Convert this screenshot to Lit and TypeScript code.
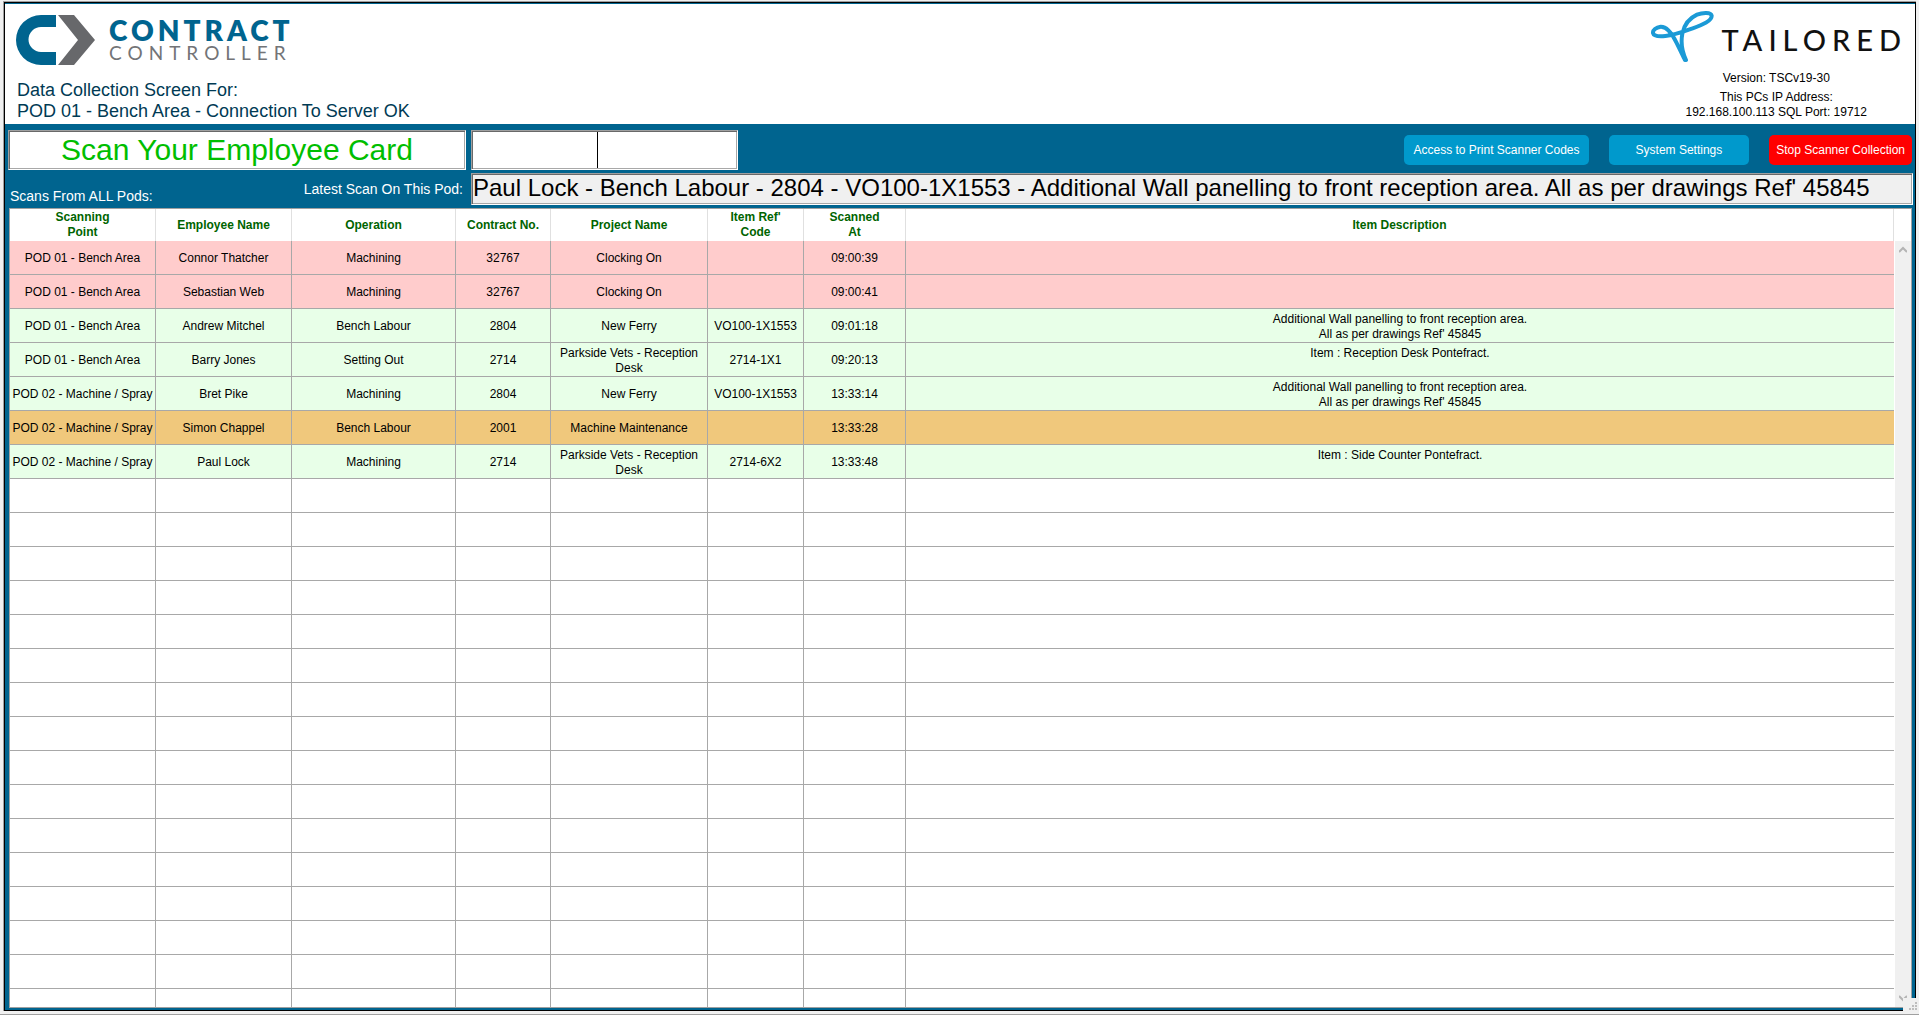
import { LitElement, html, css, nothing } from "lit";
import { customElement, property } from "lit/decorators.js";

type Tone = "clock" | "job" | "maintenance";

interface Scan {
  tone: Tone;
  point: string;
  employee: string;
  operation: string;
  contract: string;
  project: string;
  itemRef: string;
  time: string;
  description: string[];
}

const scan = (
  tone: Tone,
  point: string,
  employee: string,
  operation: string,
  contract: string,
  project: string,
  itemRef: string,
  time: string,
  ...description: string[]
): Scan => ({ tone, point, employee, operation, contract, project, itemRef, time, description });

const BENCH = "POD 01 - Bench Area";
const SPRAY = "POD 02 - Machine / Spray";
const WALL = ["Additional Wall panelling to front reception area.", "All as per drawings Ref' 45845"];

const SCANS: Scan[] = [
  scan("clock", BENCH, "Connor Thatcher", "Machining", "32767", "Clocking On", "", "09:00:39"),
  scan("clock", BENCH, "Sebastian Web", "Machining", "32767", "Clocking On", "", "09:00:41"),
  scan("job", BENCH, "Andrew Mitchel", "Bench Labour", "2804", "New Ferry", "VO100-1X1553", "09:01:18", ...WALL),
  scan("job", BENCH, "Barry Jones", "Setting Out", "2714", "Parkside Vets - Reception Desk", "2714-1X1", "09:20:13", "Item : Reception Desk Pontefract."),
  scan("job", SPRAY, "Bret Pike", "Machining", "2804", "New Ferry", "VO100-1X1553", "13:33:14", ...WALL),
  scan("maintenance", SPRAY, "Simon Chappel", "Bench Labour", "2001", "Machine Maintenance", "", "13:33:28"),
  scan("job", SPRAY, "Paul Lock", "Machining", "2714", "Parkside Vets - Reception Desk", "2714-6X2", "13:33:48", "Item : Side Counter Pontefract."),
];

const BLANK_ROWS = 16;

@customElement("contract-logo")
class ContractLogo extends LitElement {
  static styles = css`
    :host { display: flex; align-items: center; gap: 13px; }
    .mark { display: block; width: 80px; height: 50px; }
    .words { display: flex; flex-direction: column; white-space: nowrap; }
    .top { font: 800 28px/26px Lato, sans-serif; letter-spacing: 4px; color: #00648f; }
    .bottom { font: 400 19px/20px Lato, sans-serif; letter-spacing: 6px; color: #737477; }
  `;
  render() {
    return html`
      <svg class="mark" viewBox="0 0 80 50" aria-hidden="true">
        <path fill="#00648f" d="M40 0H25a25 25 0 0 0 0 50H40V37H25a12 12 0 0 1 0-25H40Z" />
        <path fill="#67686b" d="M42 0H58L79 25L58 50H42L62 25Z" />
      </svg>
      <div class="words"><span class="top">CONTRACT</span><span class="bottom">CONTROLLER</span></div>
    `;
  }
}

@customElement("tailored-logo")
class TailoredLogo extends LitElement {
  static styles = css`
    :host { display: flex; align-items: center; gap: 7px; }
    .mark { display: block; width: 63px; height: 53px; }
    .word { font: 500 29px/32px Lato, sans-serif; letter-spacing: 6px; color: #111; padding-top: 7px; margin-right: -6px; }
  `;
  render() {
    return html`
      <svg class="mark" viewBox="35 30 189 159" aria-hidden="true">
        <path
          fill="none"
          stroke="#1b9ad6"
          stroke-width="12"
          stroke-linejoin="round"
          stroke-linecap="round"
          d="M137 180C131 168 121 147 111 127C98 100 84 79 64 80C50 82 40 91 41 99C43 108 59 110 78 108C108 105 132 95 160 85C190 74 218 62 217 47C215 36 190 37 173 44C149 55 134 76 129 101C124 128 129 157 140 180Z"
        />
      </svg>
      <span class="word">TAILORED</span>
    `;
  }
}

@customElement("scan-table")
class ScanTable extends LitElement {
  @property({ attribute: false }) scans: Scan[] = [];
  @property({ type: Number }) blanks = 0;

  static styles = css`
    :host {
      display: flex;
      min-height: 0;
      overflow: hidden;
      background: #fff;
      border: 1px solid #a0a0a0;
      font: 12px/15px "Liberation Sans", Arial, sans-serif;
    }
    .view { flex: 1; min-width: 0; overflow: hidden; padding-right: 1px; }
    .grid { width: 100%; table-layout: fixed; border-collapse: separate; border-spacing: 0; }
    .point { width: 146px; }
    .employee { width: 136px; }
    .operation { width: 164px; }
    .contract { width: 95px; }
    .project { width: 157px; }
    .ref { width: 96px; }
    .time { width: 102px; }
    th, td { box-sizing: border-box; padding: 0 2px; text-align: center; vertical-align: middle; }
    th { height: 32px; padding: 0 40px; color: #006400; border-right: 1px solid #e0e0e0; }
    th.tight { padding: 0 2px; }
    td { height: 34px; padding-top: 2px; color: #000; border-right: 1px solid #a8a8a8; border-bottom: 1px solid #a8a8a8; }
    td:last-child { border-right: 0; padding-top: 3px; vertical-align: top; }
    .clock { background: #ffcccc; }
    .job { background: #e8ffe8; }
    .maintenance { background: #f0c87c; }
    .line { display: block; }
    .bar {
      display: flex;
      flex-direction: column;
      justify-content: space-between;
      align-items: center;
      width: 16px;
      margin-top: 32px;
      padding: 5px 0;
      box-sizing: border-box;
      background: #f0f0f0;
    }
    .arrow { display: block; width: 8px; height: 8px; }
  `;

  render() {
    return html`
      <div class="view">
        <table class="grid">
          <colgroup>
            <col class="point" /><col class="employee" /><col class="operation" /><col class="contract" />
            <col class="project" /><col class="ref" /><col class="time" /><col />
          </colgroup>
          <thead>
            <tr>
              <th scope="col">Scanning Point</th>
              <th scope="col" class="tight">Employee Name</th>
              <th scope="col" class="tight">Operation</th>
              <th scope="col" class="tight">Contract No.</th>
              <th scope="col" class="tight">Project Name</th>
              <th scope="col" class="tight">Item Ref'<br />Code</th>
              <th scope="col" class="tight">Scanned<br />At</th>
              <th scope="col" class="tight">Item Description</th>
            </tr>
          </thead>
          <tbody>
            ${this.scans.map(
              (s) => html`<tr class=${s.tone}>
                <td>${s.point}</td>
                <td>${s.employee}</td>
                <td>${s.operation}</td>
                <td>${s.contract}</td>
                <td>${s.project}</td>
                <td>${s.itemRef}</td>
                <td>${s.time}</td>
                <td>${s.description.length ? s.description.map((d) => html`<span class="line">${d}</span>`) : nothing}</td>
              </tr>`
            )}
            ${Array.from(
              { length: this.blanks },
              () => html`<tr><td></td><td></td><td></td><td></td><td></td><td></td><td></td><td></td></tr>`
            )}
          </tbody>
        </table>
      </div>
      <div class="bar" aria-hidden="true">
        <svg class="arrow" viewBox="0 0 8 8"><path d="M0 6L4 2L8 6" fill="none" stroke="#b4b4b4" stroke-width="2" /></svg>
        <svg class="arrow" viewBox="0 0 8 8"><path d="M0 2L4 6L8 2" fill="none" stroke="#b4b4b4" stroke-width="2" /></svg>
      </div>
    `;
  }
}

@customElement("app-root")
class AppRoot extends LitElement {
  static styles = css`
    :host {
      display: block;
      position: relative;
      box-sizing: border-box;
      height: 100vh;
      padding: 1px 3px 3px 3px;
      overflow: hidden;
      background: #f0f0f0;
      border-bottom: 1px solid #a0a0a0;
      font-family: "Liberation Sans", Arial, sans-serif;
    }
    .frame {
      box-sizing: border-box;
      height: 100%;
      border-top: 1px solid #a0a0a0;
      border-left: 1px solid #a0a0a0;
    }
    .window {
      display: flex;
      flex-direction: column;
      box-sizing: border-box;
      height: 100%;
      border: 1px solid #000;
      background: #00648f;
      padding-top: 1px;
    }
    .header {
      display: flex;
      justify-content: space-between;
      box-sizing: border-box;
      height: 120px;
      background: #fff;
      padding: 6px 14px 0 11px;
    }
    .left { display: flex; flex-direction: column; gap: 15px; padding-top: 5px; }
    .title { margin: 0; padding-left: 1px; font-size: 18px; line-height: 21px; font-weight: 400; color: #003a54; }
    .right { display: flex; flex-direction: column; align-items: center; font-size: 12px; line-height: 15px; text-align: center; }
    .version { padding-top: 8px; }
    .address { padding-top: 4px; }
    .line { display: block; }
    .panel {
      display: grid;
      grid-template-columns: 458px minmax(0, 1fr);
      grid-template-rows: 40px 32px;
      gap: 3px 5px;
      padding: 6px 2px 3px 3px;
    }
    .sunken {
      box-sizing: border-box;
      background: #fff;
      border: 1px solid;
      border-color: #a0a0a0 #fff #fff #a0a0a0;
      box-shadow: inset 1px 1px #696969, inset -1px -1px #a8a8a8;
    }
    .prompt { display: block; font-size: 30px; line-height: 38px; text-align: center; color: #00be00; }
    .tools { display: flex; justify-content: space-between; align-items: center; }
    .scanbox { position: relative; display: flex; }
    .code { width: 267px; height: 40px; padding: 0 4px; font: 24px "Liberation Sans", Arial, sans-serif; text-align: center; border-radius: 0; outline: none; }
    .caret { position: absolute; left: 126px; top: 2px; bottom: 2px; width: 1px; background: #000; }
    .actions { display: flex; gap: 20px; padding-right: 1px; }
    .action {
      height: 30px;
      padding: 0 9px;
      border: 0;
      border-radius: 5px;
      background: #0099cc;
      color: #fff;
      font: 12px/15px "Liberation Sans", Arial, sans-serif;
    }
    .settings { padding: 0 27px; }
    .stop { background: #f00; padding: 0 7px; }
    .labels { display: flex; justify-content: space-between; font-size: 14px; line-height: 18px; color: #fff; padding: 0 3px 0 2px; }
    .all { align-self: flex-end; }
    .pod { align-self: center; }
    .latest { width: 100%; height: 32px; padding: 0 1px 3px; font: 24px "Liberation Sans", Arial, sans-serif; color: #000; background: #f0f0f0; border-radius: 0; outline: none; }
    .table { flex: 1; margin: 0 3px 2px 4px; }
    .grip { position: absolute; right: 0; bottom: 0; width: 16px; height: 16px; background: #f0f0f0; }
    .dots { display: block; width: 16px; height: 16px; }
  `;

  render() {
    return html`
      <div class="frame">
        <main class="window">
          <header class="header">
            <div class="left">
              <contract-logo></contract-logo>
              <h1 class="title">
                <span class="line">Data Collection Screen For:</span>
                <span class="line">POD 01 - Bench Area - Connection To Server OK</span>
              </h1>
            </div>
            <div class="right">
              <tailored-logo></tailored-logo>
              <span class="version">Version: TSCv19-30</span>
              <span class="address">
                <span class="line">This PCs IP Address:</span>
                <span class="line">192.168.100.113 SQL Port: 19712</span>
              </span>
            </div>
          </header>
          <section class="panel">
            <label class="sunken prompt" for="code">Scan Your Employee Card</label>
            <div class="tools">
              <div class="scanbox">
                <input class="sunken code" id="code" type="text" autocomplete="off" />
                <span class="caret"></span>
              </div>
              <div class="actions">
                <button class="action" type="button">Access to Print Scanner Codes</button>
                <button class="action settings" type="button">System Settings</button>
                <button class="action stop" type="button">Stop Scanner Collection</button>
              </div>
            </div>
            <div class="labels">
              <span class="all">Scans From ALL Pods:</span>
              <label class="pod" for="latest">Latest Scan On This Pod:</label>
            </div>
            <input
              class="sunken latest"
              id="latest"
              type="text"
              readonly
              value="Paul Lock - Bench Labour - 2804 - VO100-1X1553 - Additional Wall panelling to front reception area. All as per drawings Ref' 45845"
            />
          </section>
          <scan-table class="table" .scans=${SCANS} .blanks=${BLANK_ROWS}></scan-table>
        </main>
      </div>
      <div class="grip" aria-hidden="true">
        <svg class="dots" viewBox="0 0 16 16" fill="#bdbdbd">
          <path d="M12 4h2v2h-2zM9 7h2v2h-2zM12 7h2v2h-2zM6 10h2v2h-2zM9 10h2v2h-2zM12 10h2v2h-2z" />
        </svg>
      </div>
    `;
  }
}
